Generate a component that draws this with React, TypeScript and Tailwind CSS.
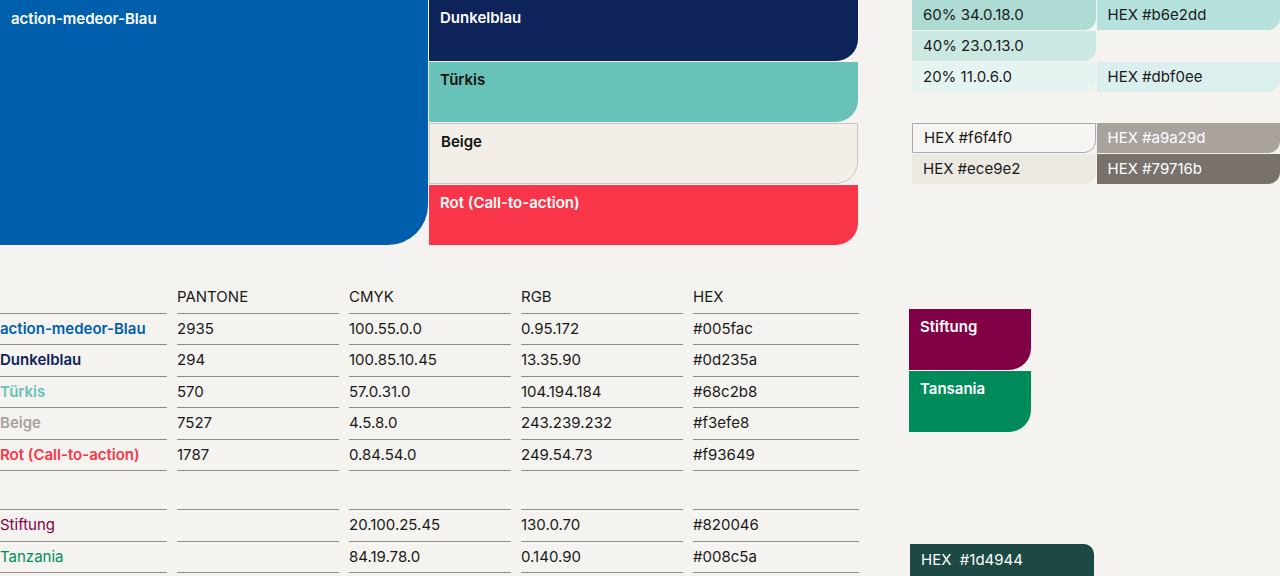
const font = { fontFamily: "Inter, 'Liberation Sans', sans-serif" };

const bars = [
  { name: "Dunkelblau", cls: "bg-[#0d235a] text-white" },
  { name: "Türkis", cls: "bg-[#68c2b8] text-[#111]" },
  { name: "Beige", cls: "bg-[#f3efe8] text-[#111] border border-[#c9c6c0]" },
  { name: "Rot (Call-to-action)", cls: "bg-[#f93649] text-white" },
];

const rows = [
  { name: "action-medeor-Blau", color: "text-[#005fac]", p: "2935", c: "100.55.0.0", r: "0.95.172", h: "#005fac" },
  { name: "Dunkelblau", color: "text-[#0d235a]", p: "294", c: "100.85.10.45", r: "13.35.90", h: "#0d235a" },
  { name: "Türkis", color: "text-[#68c2b8]", p: "570", c: "57.0.31.0", r: "104.194.184", h: "#68c2b8" },
  { name: "Beige", color: "text-[#a9a29d]", p: "7527", c: "4.5.8.0", r: "243.239.232", h: "#f3efe8" },
  { name: "Rot (Call-to-action)", color: "text-[#f93649]", p: "1787", c: "0.84.54.0", r: "249.54.73", h: "#f93649" },
];

const rows2 = [
  { name: "Stiftung", color: "text-[#820046]", p: "", c: "20.100.25.45", r: "130.0.70", h: "#820046" },
  { name: "Tanzania", color: "text-[#008c5a]", p: "", c: "84.19.78.0", r: "0.140.90", h: "#008c5a" },
];

function Cell({ children, cls = "", w, h = "h-[31.5px]" }: { children?: React.ReactNode; cls?: string; w: string; h?: string }) {
  return <div className={`${w} ${h} border-b border-[#8f8c88] flex items-center text-[15px] ${cls}`}>{children}</div>;
}

function Row({ r, bold }: { r: typeof rows[0]; bold?: boolean }) {
  return (
    <div className="flex gap-[10px] text-[#1a1a1a]">
      <Cell w="w-[167px]" cls={`${r.color} ${bold ? "font-semibold" : ""}`}>{r.name}</Cell>
      <Cell w="w-[162px]">{r.p}</Cell>
      <Cell w="w-[162px]">{r.c}</Cell>
      <Cell w="w-[162px]">{r.r}</Cell>
      <Cell w="w-[166px]">{r.h}</Cell>
    </div>
  );
}

function Sw({ text, cls }: { text?: string; cls: string }) {
  return <div className={`h-[30px] flex items-center px-[11px] text-[15px] rounded-br-[12px] ${cls}`}>{text}</div>;
}

export default function App() {
  return (
    <div style={font} className="w-[1280px] h-[576px] overflow-hidden bg-[#f4f3ef] flex">
      <div className="w-[860px] flex flex-col">
        <div className="flex h-[246px]">
          <div className="w-[428px] h-[245px] bg-[#005fac] rounded-br-[40px] text-white font-semibold text-[15px] px-[11px] py-[8px]">
            action-medeor-Blau
          </div>
          <div className="w-[429px] ml-px flex flex-col">
            {bars.map((b) => (
              <div key={b.name} className={`h-[61px] mb-px rounded-br-[22px] px-[11px] py-[7px] font-semibold text-[15px] ${b.cls}`}>
                {b.name}
              </div>
            ))}
          </div>
        </div>
        <div className="mt-[36px]">
          <div className="flex gap-[10px] text-[15px] text-[#1a1a1a]">
            <Cell w="w-[167px]" />
            <Cell w="w-[162px]">PANTONE</Cell>
            <Cell w="w-[162px]">CMYK</Cell>
            <Cell w="w-[162px]">RGB</Cell>
            <Cell w="w-[166px]">HEX</Cell>
          </div>
          {rows.map((r) => <Row key={r.name} r={r} bold />)}
          <div className="flex gap-[10px]">
            <Cell w="w-[167px]" h="h-[39px]" />
            <Cell w="w-[162px]" h="h-[39px]" />
            <Cell w="w-[162px]" h="h-[39px]" />
            <Cell w="w-[162px]" h="h-[39px]" />
            <Cell w="w-[166px]" h="h-[39px]" />
          </div>
          {rows2.map((r) => <Row key={r.name} r={r} />)}
        </div>
      </div>
      <div className="flex-1 flex flex-col pl-[52px]">
        <div className="grid grid-cols-2 gap-px w-[368px] text-[#1a1a1a]">
          <Sw text="60% 34.0.18.0" cls="bg-[#aedcd5]" />
          <Sw text="HEX #b6e2dd" cls="bg-[#b6e2dd]" />
          <Sw text="40% 23.0.13.0" cls="bg-[#cbe8e3]" />
          <div />
          <Sw text="20% 11.0.6.0" cls="bg-[#e6f4f1]" />
          <Sw text="HEX #dbf0ee" cls="bg-[#dbf0ee]" />
        </div>
        <div className="grid grid-cols-2 gap-px w-[368px] mt-[31px] text-[#1a1a1a]">
          <Sw text="HEX #f6f4f0" cls="bg-[#f6f4f0] border border-[#a9a8b4]" />
          <Sw text="HEX #a9a29d" cls="bg-[#a9a29d] text-white" />
          <Sw text="HEX #ece9e2" cls="bg-[#ece9e2]" />
          <Sw text="HEX #79716b" cls="bg-[#79716b] text-white" />
        </div>
        <div className="mt-[125px] -ml-[3px] w-[122px]">
          <div className="h-[61px] bg-[#820046] rounded-br-[22px] text-white font-semibold text-[15px] px-[11px] py-[7px]">Stiftung</div>
          <div className="h-[61px] mt-px bg-[#008c5a] rounded-br-[22px] text-white font-semibold text-[15px] px-[11px] py-[7px]">Tansania</div>
        </div>
        <div className="mt-[112px] -ml-[2px] w-[184px] h-[32px] bg-[#1d4944] rounded-tr-[10px] text-white text-[15px] flex items-center px-[11px] whitespace-pre">
          {"HEX  #1d4944"}
        </div>
      </div>
    </div>
  );
}
